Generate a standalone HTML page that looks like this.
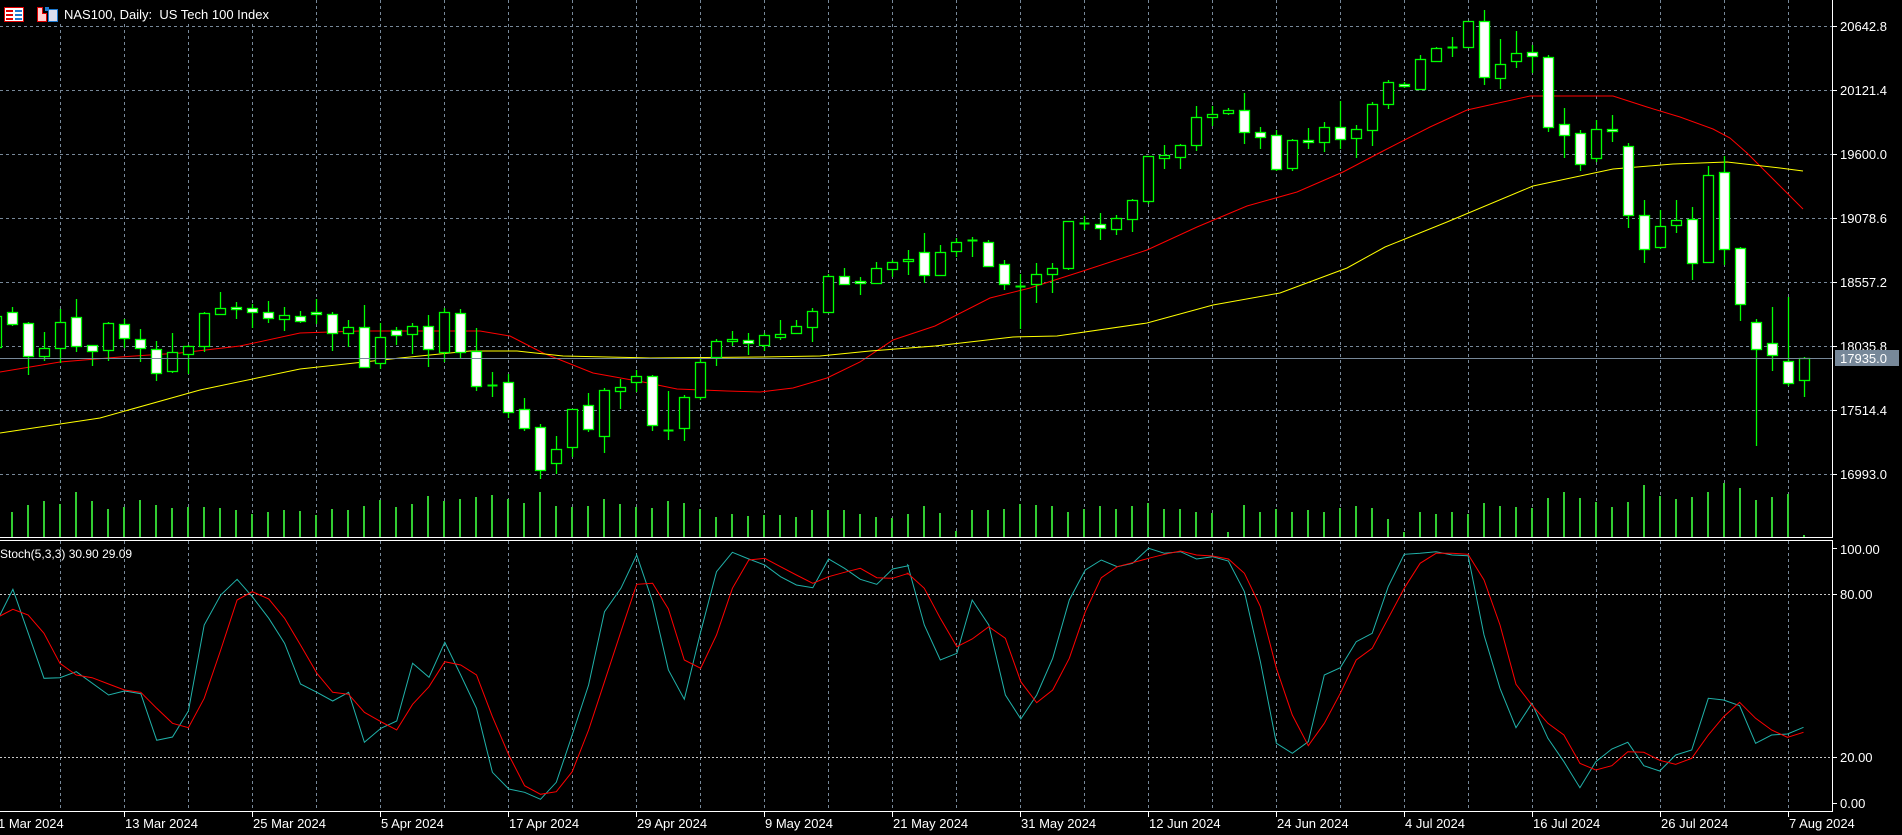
<!DOCTYPE html>
<html><head><meta charset="utf-8"><style>
html,body{margin:0;padding:0;background:#000;overflow:hidden}
svg{display:block}
text{font-family:"Liberation Sans",sans-serif;fill:#fff}
</style></head><body>
<svg id="s" width="1902" height="835" viewBox="0 0 1902 835" xmlns="http://www.w3.org/2000/svg">
<rect width="1902" height="835" fill="#000"/>
<g id="grid"></g>
<g id="vol"></g>
<g id="ma"></g>
<g id="candles"></g>
<g id="stoch"></g>
<line x1="0" y1="358.5" x2="1832" y2="358.5" stroke="#778899" stroke-width="1"/>
<line x1="1832.5" y1="0" x2="1832.5" y2="537" stroke="#fff"/>
<line x1="0" y1="537.5" x2="1833" y2="537.5" stroke="#fff"/>
<line x1="0" y1="540.5" x2="1833" y2="540.5" stroke="#fff"/>
<line x1="1832.5" y1="540" x2="1832.5" y2="811" stroke="#fff"/>
<line x1="0" y1="811.5" x2="1833" y2="811.5" stroke="#fff"/>
<g id="ticks" stroke="#fff"></g>
<g font-size="13">
<text x="1840" y="31">20642.8</text>
<text x="1840" y="95">20121.4</text>
<text x="1840" y="159">19600.0</text>
<text x="1840" y="223">19078.6</text>
<text x="1840" y="287">18557.2</text>
<text x="1840" y="351">18035.8</text>
<text x="1840" y="415">17514.4</text>
<text x="1840" y="479">16993.0</text>
</g>
<rect x="1835" y="350" width="64" height="16" fill="#778899"/>
<text x="1840" y="363" font-size="13">17935.0</text>
<g font-size="13">
<text x="1840" y="554">100.00</text>
<text x="1840" y="599">80.00</text>
<text x="1840" y="762">20.00</text>
<text x="1840" y="808">0.00</text>
</g>
<g font-size="13">
<text x="-2" y="828">1 Mar 2024</text>
<text x="125" y="828">13 Mar 2024</text>
<text x="253" y="828">25 Mar 2024</text>
<text x="381" y="828">5 Apr 2024</text>
<text x="509" y="828">17 Apr 2024</text>
<text x="637" y="828">29 Apr 2024</text>
<text x="765" y="828">9 May 2024</text>
<text x="893" y="828">21 May 2024</text>
<text x="1021" y="828">31 May 2024</text>
<text x="1149" y="828">12 Jun 2024</text>
<text x="1277" y="828">24 Jun 2024</text>
<text x="1405" y="828">4 Jul 2024</text>
<text x="1533" y="828">16 Jul 2024</text>
<text x="1661" y="828">26 Jul 2024</text>
<text x="1789" y="828">7 Aug 2024</text>
</g>
<text x="0" y="558" font-size="12">Stoch(5,3,3) 30.90 29.09</text>
<rect x="0" y="0" width="285" height="23" fill="#000"/>
<g>
<rect x="4.5" y="7.5" width="19" height="14" fill="#fff" stroke="#e00000"/>
<rect x="6" y="10" width="7" height="2" fill="#e00000"/><rect x="6" y="14" width="7" height="2" fill="#e00000"/><rect x="6" y="18" width="7" height="2" fill="#e00000"/>
<rect x="15" y="10" width="7" height="2" fill="#1e7ad0"/><rect x="15" y="14" width="7" height="2" fill="#1e7ad0"/><rect x="15" y="18" width="7" height="2" fill="#1e7ad0"/>
<path d="M37.5 7.5h5v6h4v8h-9z" fill="#ffd0d0" stroke="#e00000"/>
<rect x="48.5" y="9.5" width="9" height="12" fill="#dde" stroke="#1e7ad0"/>
<rect x="45" y="7" width="4" height="4" fill="#1e7ad0"/>
</g>
<text x="64" y="19" font-size="13">NAS100, Daily:&#160; US Tech 100 Index</text>
</svg>
<script>
var NS="http://www.w3.org/2000/svg";
function el(p,t,a){var e=document.createElementNS(NS,t);for(var k in a)e.setAttribute(k,a[k]);document.getElementById(p).appendChild(e);return e;}
for(var x=60;x<=1800;x+=64){
 el("grid","line",{x1:x+.5,y1:0,x2:x+.5,y2:537,stroke:"#778899","stroke-dasharray":"3,3"});
 el("grid","line",{x1:x+.5,y1:541,x2:x+.5,y2:811,stroke:"#778899","stroke-dasharray":"3,3"});
}
for(var y=26;y<=474;y+=64){
 el("grid","line",{x1:0,y1:y+.5,x2:1832,y2:y+.5,stroke:"#778899","stroke-dasharray":"3,3"});
 el("ticks","line",{x1:1832,y1:y+.5,x2:1837,y2:y+.5});
}
[594,757].forEach(function(y){el("grid","line",{x1:0,y1:y+.5,x2:1832,y2:y+.5,stroke:"#c8c8c8","stroke-dasharray":"2,2"});el("ticks","line",{x1:1832,y1:y+.5,x2:1837,y2:y+.5});});
[548,803].forEach(function(y){el("ticks","line",{x1:1832,y1:y+.5,x2:1837,y2:y+.5});});
for(var x=124;x<=1800;x+=128){el("ticks","line",{x1:x+.5,y1:811,x2:x+.5,y2:817});}
var V=[512,505,501,504,492,501,509,507,500,505,508,507,507,508,510,514,512,510,511,515,509,510,506,500,507,504,496,501,499,497,495,499,503,492,506,507,506,499,504,507,508,501,503,509,517,514,516,515,515,517,510,510,510,514,517,518,514,506,513,531,510,510,509,504,505,506,512,509,506,509,506,503,509,509,512,513,532,505,512,509,512,510,512,508,506,508,519,532,512,514,512,514,503,506,507,508,498,492,498,502,507,502,485,496,499,497,492,483,488,500,497,494,535];
V.forEach(function(t,k){var x=12+16*k;el("vol","rect",{x:x-1,y:t,width:2,height:537-t,fill:"#32cd32"});});
function pl(pts,c){el("ma","polyline",{points:pts.map(function(p){return p.join(",")}).join(" "),fill:"none",stroke:c,"stroke-width":1});}
pl([[0,372],[60,362],[120,357],[180,353],[240,346],[300,333],[360,331],[420,331],[480,331],[510,336],[543,353],[593,373],[643,382],[677,389],[727,391],[760,392],[793,388],[827,378],[860,362],[893,340],[935,326],[990,298],[1030,288],[1083,271],[1147,250],[1197,227],[1247,206],[1297,192],[1343,172],[1385,150],[1430,127],[1467,110],[1530,96],[1613,96],[1647,107],[1680,117],[1713,129],[1730,138],[1747,153],[1780,186],[1803,209]],"#ff0000");
pl([[0,433],[100,418],[200,390],[300,369],[400,358],[470,351],[517,351],[563,356],[650,358],[760,357],[820,356],[870,351],[935,346],[1013,337],[1057,336],[1147,323],[1213,305],[1280,293],[1347,268],[1385,247],[1447,222],[1533,186],[1613,169],[1673,164],[1727,162],[1780,168],[1803,171]],"#ffff00");
var C=[[-1,316,347,305,350,0],[0,312,324,307,326,1],[1,323,356,322,375,1],[2,348,356,332,361,0],[3,322,348,309,363,0],[4,317,346,299,352,1],[5,345,351,345,366,1],[6,323,350,322,361,0],[7,324,338,319,348,1],[8,339,348,329,362,1],[9,349,373,341,381,1],[10,352,371,333,373,0],[11,346,354,345,374,0],[12,313,346,312,352,0],[13,308,314,292,315,0],[14,307,309,302,319,1],[15,308,312,304,328,1],[16,312,318,301,323,1],[17,315,319,307,331,0],[18,316,321,311,323,1],[19,312,314,299,324,1],[20,314,333,312,351,1],[21,327,333,320,347,0],[22,327,367,305,368,1],[23,337,363,323,369,0],[24,330,335,327,345,1],[25,326,334,323,354,0],[26,326,349,315,367,1],[27,312,352,308,362,0],[28,313,352,309,358,1],[29,351,386,328,391,1],[30,385,386,372,397,1],[31,382,412,374,418,1],[32,409,428,398,431,1],[33,427,470,424,479,1],[34,449,463,436,474,0],[35,409,447,409,457,0],[36,405,429,393,432,1],[37,390,436,388,453,0],[38,387,391,379,409,0],[39,376,382,370,392,0],[40,376,425,375,431,1],[41,430,430,391,440,0],[42,397,428,395,441,0],[43,362,397,359,400,0],[44,341,357,339,366,0],[45,339,341,331,346,0],[46,340,343,333,355,1],[47,335,345,333,351,0],[48,334,337,320,340,0],[49,326,333,320,334,0],[50,311,327,308,342,0],[51,276,312,274,312,0],[52,276,284,268,285,1],[53,281,283,277,295,1],[54,268,283,262,283,0],[55,262,269,260,277,0],[56,259,261,250,275,0],[57,252,275,233,283,1],[58,252,275,245,276,0],[59,242,251,238,257,0],[60,240,240,237,257,0],[61,242,266,240,267,1],[62,264,284,260,290,1],[63,286,286,274,329,0],[64,274,284,263,303,0],[65,268,274,263,293,0],[66,221,268,221,270,0],[67,223,223,216,230,0],[68,224,228,213,240,1],[69,218,229,215,235,0],[70,200,219,199,232,0],[71,156,201,156,204,0],[72,155,158,145,169,0],[73,145,157,144,169,0],[74,117,145,106,151,0],[75,114,117,106,126,0],[76,110,113,108,115,0],[77,110,132,93,144,1],[78,132,137,127,149,1],[79,135,169,130,171,1],[80,140,168,139,171,0],[81,140,142,128,149,1],[82,127,142,122,152,0],[83,127,139,101,149,1],[84,129,138,125,158,0],[85,104,130,102,146,0],[86,82,104,80,109,0],[87,84,86,82,88,1],[88,59,89,55,90,0],[89,48,61,47,62,0],[90,47,47,37,57,0],[91,21,47,21,48,0],[92,21,77,10,85,1],[93,64,78,39,89,0],[94,53,61,31,68,0],[95,52,56,45,73,1],[96,57,127,55,132,1],[97,124,135,108,158,1],[98,133,164,130,171,1],[99,129,158,120,162,0],[100,129,131,115,142,1],[101,146,215,143,228,1],[102,215,249,200,263,1],[103,226,247,210,249,0],[104,220,225,200,233,0],[105,219,263,207,280,1],[106,175,262,166,263,0],[107,172,249,156,265,1],[108,248,304,247,321,1],[109,322,349,319,446,1],[110,343,355,307,371,1],[111,361,383,297,386,1],[112,358,380,357,397,0]];
C.forEach(function(c){var x=12+16*c[0]+.5;
 el("candles","line",{x1:x,y1:c[3],x2:x,y2:c[4],stroke:"#00ff00","stroke-width":1.3});
 if(c[2]-c[1]<2){el("candles","line",{x1:x-5,y1:c[1]+.5,x2:x+5,y2:c[1]+.5,stroke:"#00ff00","stroke-width":2});}
 else el("candles","rect",{x:x-5,y:c[1]+.5,width:10,height:c[2]-c[1],fill:c[5]?"#fff":"#000",stroke:"#00ff00","stroke-width":1.3});
});
function sp(a,b,sx,ox){return a.map(function(p){return [(ox+p[0]/sx).toFixed(1),(535+p[1]/3).toFixed(1)].join(",")}).join(" ");}
var tk1=[[0,240],[22,163],[75,430],[102,428],[130,410],[185,480],[212,468],[240,476],[267,616],[294,606],[321,528],[348,270],[376,180],[404,133],[430,185],[458,250],[485,325],[512,447],[540,472],[567,498],[594,472],[621,622],[649,580],[676,558],[703,385],[731,427],[758,322],[785,420],[812,520],[839,712],[867,762],[894,772],[921,793],[948,742],[975,600],[1003,450],[1030,230],[1058,160],[1085,60],[1112,200],[1139,405],[1166,493],[1194,290],[1221,110],[1248,52],[1276,72],[1303,90],[1330,125],[1357,150],[1385,158],[1412,72],[1439,100],[1466,133],[1494,148],[1521,102],[1548,92]];
var rd1=[[0,243],[22,223],[48,240],[75,295],[102,385],[130,420],[157,428],[185,447],[212,465],[240,472],[267,520],[294,565],[321,578],[348,490],[376,345],[404,195],[430,170],[458,192],[485,250],[512,330],[540,415],[567,472],[594,478],[621,532],[649,560],[676,585],[703,508],[731,455],[758,380],[785,390],[812,420],[839,545],[867,660],[894,752],[921,778],[948,770],[975,710],[1003,585],[1030,440],[1058,290],[1085,148],[1112,145],[1139,222],[1166,375],[1194,400],[1221,300],[1248,160],[1276,75],[1303,70],[1330,95],[1357,120],[1385,145],[1412,125],[1439,112],[1466,100],[1494,128],[1521,130],[1548,115]];
var tk2=[[12,90],[38,270],[63,375],[89,355],[113,195],[139,270],[165,480],[189,552],[214,480],[239,370],[265,195],[290,105],[315,75],[340,95],[364,85],[389,40],[414,55],[439,50],[464,72],[489,65],[514,78],[539,170],[564,380],[589,625],[614,655],[639,620],[664,420],[689,398],[714,320],[739,295],[764,155],[789,58],[814,55],[839,50],[864,60],[889,62],[914,300],[939,460],[964,578],[989,505],[1014,610],[1039,680],[1064,758],[1089,680],[1114,642],[1139,622],[1164,692],[1189,708],[1214,660],[1239,645],[1265,490],[1289,495],[1314,512],[1339,625],[1364,600],[1389,597],[1414,577]];
var rd2=[[12,115],[38,160],[63,250],[89,335],[113,312],[139,275],[165,310],[189,440],[214,503],[239,465],[265,370],[290,230],[315,128],[340,95],[364,83],[389,70],[414,58],[439,48],[464,60],[489,63],[514,72],[539,115],[564,215],[589,400],[614,540],[639,632],[664,565],[689,475],[714,375],[739,340],[764,250],[789,160],[814,85],[839,55],[864,55],[889,58],[914,135],[939,270],[964,448],[989,510],[1014,565],[1039,600],[1064,685],[1089,705],[1114,692],[1139,650],[1164,652],[1189,676],[1214,688],[1239,670],[1265,600],[1289,545],[1314,502],[1339,550],[1364,585],[1389,607],[1414,592]];
function sl(s,c){el("stoch","polyline",{points:s,fill:"none",stroke:c,"stroke-width":1});}
sl(sp(tk1,0,1.704,0)+" "+sp(tk2,0,1.565,900),"#20b2aa");
sl(sp(rd1,0,1.704,0)+" "+sp(rd2,0,1.565,900),"#ff0000");
</script>
</body></html>
